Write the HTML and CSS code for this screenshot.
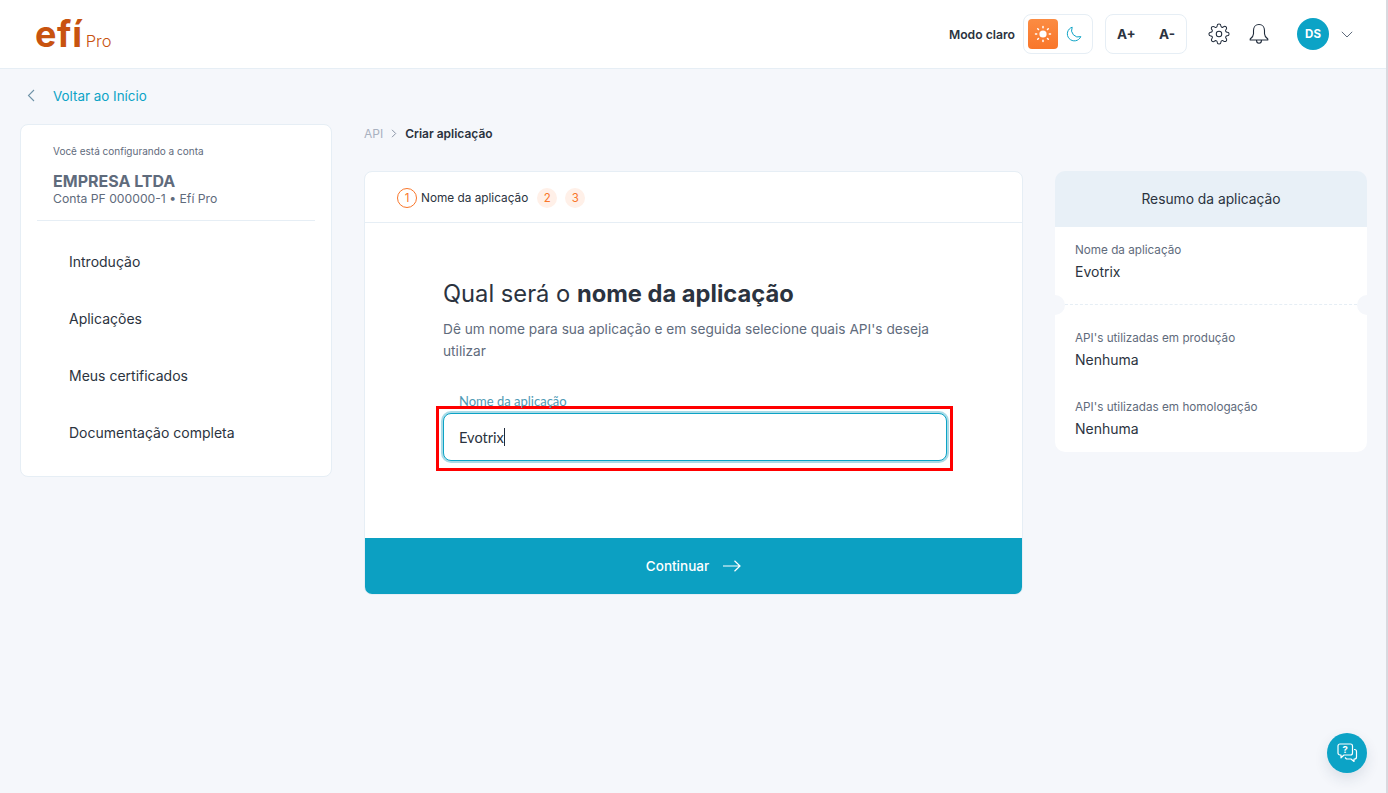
FILE: index.html
```html
<!DOCTYPE html>
<html lang="pt-BR">
<head>
    <meta charset="UTF-8">
    <title>Criar aplicação</title>
    <link rel="stylesheet" href="styles.css">
</head>
<body>
    <header class="topbar">
        <div class="logo">
            <span class="logo-word">efí</span>
            <span class="logo-pro">Pro</span>
        </div>
        <div class="topbar-tools">
            <span class="mode-label">Modo claro</span>
            <div class="tool-box mode-box">
                <span class="mode-sun">
                    <svg width="18" height="18" viewBox="0 0 18 18" fill="none" stroke="#fff" stroke-width="1.5" stroke-linecap="round">
                        <circle cx="9" cy="9" r="3.6" fill="#fff" stroke="none"/>
                        <path d="M9 1.5v1.2M9 15.3v1.2M1.5 9h1.2M15.3 9h1.2M3.7 3.7l.8.8M13.5 13.5l.8.8M3.7 14.3l.8-.8M13.5 4.5l.8-.8"/>
                    </svg>
                </span>
                <svg class="mode-moon" width="16" height="16" viewBox="0 0 16 16" fill="none" stroke="#0ca3c6" stroke-width="1">
                    <path d="M6.2 1.2a6.9 6.9 0 0 0 8.6 9.4A7 7 0 1 1 6.2 1.2z"/>
                </svg>
            </div>
            <div class="tool-box font-box">
                <span>A+</span>
                <span>A-</span>
            </div>
            <svg class="tool-icon" width="22" height="22" viewBox="0 0 24 24" fill="none" stroke="#1f2a3a" stroke-width="1.1" stroke-linejoin="round">
                <circle cx="12" cy="12" r="3"/>
                <path d="M19.4 15a1.65 1.65 0 0 0 .33 1.82l.06.06a2 2 0 0 1 0 2.83 2 2 0 0 1-2.83 0l-.06-.06a1.65 1.65 0 0 0-1.82-.33 1.65 1.65 0 0 0-1 1.51V21a2 2 0 0 1-2 2 2 2 0 0 1-2-2v-.09A1.65 1.65 0 0 0 9 19.4a1.65 1.65 0 0 0-1.82.33l-.06.06a2 2 0 0 1-2.83 0 2 2 0 0 1 0-2.83l.06-.06a1.65 1.65 0 0 0 .33-1.82 1.65 1.65 0 0 0-1.51-1H3a2 2 0 0 1-2-2 2 2 0 0 1 2-2h.09A1.65 1.65 0 0 0 4.6 9a1.65 1.65 0 0 0-.33-1.82l-.06-.06a2 2 0 0 1 0-2.83 2 2 0 0 1 2.83 0l.06.06a1.65 1.65 0 0 0 1.82.33H9a1.65 1.65 0 0 0 1-1.51V3a2 2 0 0 1 2-2 2 2 0 0 1 2 2v.09a1.65 1.65 0 0 0 1 1.51 1.65 1.65 0 0 0 1.82-.33l.06-.06a2 2 0 0 1 2.83 0 2 2 0 0 1 0 2.83l-.06.06a1.65 1.65 0 0 0-.33 1.82V9a1.65 1.65 0 0 0 1.51 1H21a2 2 0 0 1 2 2 2 2 0 0 1-2 2h-.09a1.65 1.65 0 0 0-1.51 1z"/>
            </svg>
            <svg class="tool-icon bell" width="22" height="22" viewBox="0 0 22 22" fill="none" stroke="#1f2a3a" stroke-width="1.1" stroke-linejoin="round">
                <path d="M11 1.5c-3.4 0-5.5 2.7-5.5 6v3.2c0 2.5-1.4 3.8-3.3 5.3v1h17.6v-1c-1.9-1.5-3.3-2.8-3.3-5.3V7.500c0-3.300-2.100-6-5.500-6z"/>
                <path d="M8.500 17c0 1.900 1.100 3.300 2.500 3.300s2.500-1.400 2.500-3.300"/>
            </svg>
            <span class="avatar">DS</span>
            <svg class="avatar-caret" width="12" height="7" viewBox="0 0 12 7" fill="none" stroke="#5f6b7c" stroke-width="1">
                <path d="M.8.800 6 6l5.200-5.200"/>
            </svg>
        </div>
    </header>

    <a class="back-link" href="#">
        <svg width="8" height="13" viewBox="0 0 8 13" fill="none" stroke="#6f93a8" stroke-width="1.100">
            <path d="M7 1 1.500 6.500 7 12"/>
        </svg>
        <span>Voltar ao Início</span>
    </a>

    <main class="layout">
        <aside class="side-card">
            <div class="account">
                <p class="account-hint">Você está configurando a conta</p>
                <p class="account-name">EMPRESA LTDA</p>
                <p class="account-sub">Conta PF 000000-1 • Efí Pro</p>
            </div>
            <nav class="side-nav">
                <a href="#">Introdução</a>
                <a href="#">Aplicações</a>
                <a href="#">Meus certificados</a>
                <a href="#">Documentação completa</a>
            </nav>
        </aside>

        <section class="center">
            <div class="crumbs">
                <span class="crumb-root">API</span>
                <svg width="6" height="9" viewBox="0 0 6 9" fill="none" stroke="#8a94a6" stroke-width="1">
                    <path d="m1 .8 3.700 3.700L1 8.200"/>
                </svg>
                <span class="crumb-current">Criar aplicação</span>
            </div>
            <div class="wizard">
                <div class="steps">
                    <span class="step step-active">1</span>
                    <span class="step-name">Nome da aplicação</span>
                    <span class="step">2</span>
                    <span class="step">3</span>
                </div>
                <div class="wizard-body">
                    <h1>Qual será o <strong>nome da aplicação</strong></h1>
                    <p class="lead">Dê um nome para sua aplicação e em seguida selecione quais API's deseja utilizar</p>
                    <div class="field">
                        <label for="app-name">Nome da aplicação</label>
                        <div class="input-mark">
                            <div class="input-fake" id="app-name">Evotrix<span class="caret"></span></div>
                        </div>
                    </div>
                </div>
                <button class="continue-btn" type="button">
                    <span>Continuar</span>
                    <svg width="18" height="12" viewBox="0 0 18 12" fill="none" stroke="#fff" stroke-width="1.200">
                        <path d="M0 6h17M11.500.8 17 6l-5.500 5.200"/>
                    </svg>
                </button>
            </div>
        </section>

        <aside class="summary">
            <h2>Resumo da aplicação</h2>
            <div class="summary-top">
                <p class="sum-label">Nome da aplicação</p>
                <p class="sum-value">Evotrix</p>
            </div>
            <div class="summary-bottom">
                <p class="sum-label">API's utilizadas em produção</p>
                <p class="sum-value">Nenhuma</p>
                <p class="sum-label sum-gap">API's utilizadas em homologação</p>
                <p class="sum-value">Nenhuma</p>
            </div>
        </aside>
    </main>

    <button class="help-btn" type="button" aria-label="Ajuda">
        <svg width="24" height="24" viewBox="0 0 24 24" fill="none" stroke="#fff" stroke-width="1.200" stroke-linejoin="round">
            <path d="M5 3h10.500A2 2 0 0 1 17.500 5v7a2 2 0 0 1-2 2H9l-3 2.800V14H5a2 2 0 0 1-2-2V5a2 2 0 0 1 2-2z"/>
            <path d="M19 8.500h.500a2 2 0 0 1 2 2V16a2 2 0 0 1-2 2h-.500v2.500L16 18h-4.500l-1.500-1.500"/>
            <text x="10.200" y="11.800" font-size="9.500" font-weight="700" fill="#fff" stroke="none" text-anchor="middle" font-family="Inter, sans-serif">?</text>
        </svg>
    </button>
</body>
</html>
```

FILE: styles.css
```css
* {
    margin: 0;
    padding: 0;
    box-sizing: border-box;
}
body {
    font-family: 'Inter', sans-serif;
    background-color: #f5f7fb;
    color: #2b3340;
    height: 793px;
    overflow: hidden;
    border-right: 2px solid #d9d9df;
}
.topbar {
    height: 69px;
    background-color: #fff;
    border-bottom: 1px solid #e6eef5;
    display: flex;
    align-items: center;
    justify-content: space-between;
    padding: 0 33px 0 35px;
}
.logo {
    display: flex;
    align-items: baseline;
    gap: 3px;
    color: #c8530f;
}
.logo-word {
    font-weight: 700;
    font-size: 36px;
    line-height: 40px;
    letter-spacing: 0.6px;
}
.logo-pro {
    font-size: 16.500px;
    font-weight: 300;
}
.topbar-tools {
    display: flex;
    align-items: center;
}
.mode-label {
    font-size: 12.200px;
    font-weight: 600;
    color: #2b3340;
    margin-right: 8px;
}
.tool-box {
    height: 40px;
    background-color: #fff;
    border: 1px solid #e6eef5;
    border-radius: 8px;
    display: flex;
    align-items: center;
}
.mode-box {
    width: 70px;
    padding-left: 4px;
    margin-right: 12px;
}
.mode-sun {
    width: 30px;
    height: 30px;
    border-radius: 4px;
    background: linear-gradient(180deg, #fb8c43, #f9762a);
    display: flex;
    align-items: center;
    justify-content: center;
}
.mode-moon {
    margin-left: 8px;
}
.font-box {
    width: 82px;
    padding: 0 11px;
    justify-content: space-between;
    font-size: 13.500px;
    font-weight: 700;
    color: #2b3340;
    margin-right: 21px;
}
.tool-icon {
    margin-right: 18px;
}
.bell {
    margin-right: 27px;
}
.avatar {
    width: 32px;
    height: 32px;
    border-radius: 50%;
    background-color: #0ca3c6;
    color: #fff;
    font-size: 11.500px;
    font-weight: 700;
    display: flex;
    align-items: center;
    justify-content: center;
    margin-right: 12px;
}
.back-link {
    display: flex;
    align-items: center;
    height: 55px;
    padding: 0 0 2px 27px;
    gap: 18px;
    font-size: 13.400px;
    color: #0ca3c6;
    text-decoration: none;
}
.layout {
    display: flex;
    align-items: flex-start;
    padding-left: 20px;
}
.side-card {
    width: 312px;
    height: 353px;
    background-color: #fff;
    border: 1px solid #e6eef5;
    border-radius: 8px;
    padding: 0 16px;
    margin-right: 32px;
}
.account {
    padding: 20px 0 12px 16px;
    border-bottom: 1px solid #e6eef5;
}
.account-hint {
    font-size: 10px;
    line-height: 13px;
    color: #5f6b7c;
    margin-bottom: 14px;
}
.account-name {
    font-size: 16px;
    font-weight: 700;
    line-height: 18px;
    color: #5f6b7c;
}
.account-sub {
    font-size: 12.200px;
    line-height: 18px;
    color: #5f6b7c;
}
.side-nav {
    display: flex;
    flex-direction: column;
    padding: 12px 0 0 32px;
}
.side-nav a {
    height: 57px;
    display: flex;
    align-items: center;
    font-size: 14px;
    color: #2b3340;
    text-decoration: none;
}
.center {
    width: 659px;
    margin-right: 32px;
}
.crumbs {
    height: 47px;
    display: flex;
    align-items: flex-start;
    gap: 8px;
    padding-top: 1px;
    font-size: 12px;
    line-height: 17px;
}
.crumbs svg {
    margin-top: 4px;
}
.crumb-root {
    color: #a9b1c0;
}
.crumb-current {
    font-weight: 600;
    color: #2b3340;
}
.wizard {
    height: 424px;
    background-color: #fff;
    border: 1px solid #e6eef5;
    border-radius: 8px;
    overflow: hidden;
    display: flex;
    flex-direction: column;
}
.steps {
    height: 51px;
    flex-shrink: 0;
    border-bottom: 1px solid #e6eef5;
    display: flex;
    align-items: center;
    padding: 1px 0 0 32px;
}
.step {
    width: 20px;
    height: 20px;
    border-radius: 50%;
    background-color: #fff0e8;
    color: #f9762a;
    font-size: 11.500px;
    display: flex;
    align-items: center;
    justify-content: center;
    margin-right: 8px;
}
.step-active {
    background-color: #fff;
    border: 1px solid #f9762a;
    margin-right: 4px;
}
.step-name {
    font-size: 11.800px;
    color: #2b3340;
    margin-right: 9px;
}
.wizard-body {
    flex: 1;
    padding: 55px 78px 0;
}
.wizard-body h1 {
    font-size: 23.700px;
    font-weight: 400;
    line-height: 32px;
    color: #2b3340;
}
.wizard-body h1 strong {
    font-weight: 700;
}
.lead {
    font-size: 13.700px;
    line-height: 22px;
    color: #5f6b7c;
    margin-top: 8px;
    width: 500px;
}
.field {
    margin-top: 32px;
}
.field label {
    display: block;
    font-family: 'Lato', sans-serif;
    font-size: 13px;
    line-height: 14px;
    color: #4f9ab5;
    padding-left: 16px;
    margin-bottom: -2px;
}
.input-mark {
    border: 3px solid #f00;
    margin-left: -7px;
    width: 517px;
    height: 65px;
    padding: 4px 3px 0 4px;
}
.input-fake {
    height: 48px;
    border: 1px solid #0ca3c6;
    border-radius: 8px;
    box-shadow: 0 0 0 2px #a9dbe7;
    font-family: 'Lato', sans-serif;
    font-size: 14.600px;
    color: #2b3340;
    display: flex;
    align-items: center;
    padding-left: 15px;
    background-color: #fff;
}
.caret {
    width: 1px;
    height: 18px;
    background-color: #1f2a3a;
}
.continue-btn {
    height: 56px;
    flex-shrink: 0;
    border: none;
    background-color: #0ca0c2;
    color: #fff;
    font-family: inherit;
    font-size: 13.500px;
    font-weight: 500;
    display: flex;
    align-items: center;
    justify-content: center;
    gap: 14px;
}
.summary {
    width: 312px;
    margin-top: 47px;
    border-radius: 10px;
    overflow: hidden;
    position: relative;
}
.summary h2 {
    height: 56px;
    background-color: #e8f0f7;
    font-size: 13.800px;
    font-weight: 400;
    color: #2b3340;
    display: flex;
    align-items: center;
    justify-content: center;
}
.summary-top {
    position: relative;
    background-color: #fff;
    height: 78px;
    padding: 14px 20px 0;
    border-bottom: 1px dashed #e6eef5;
}
/* recortes laterais do ticket */
.summary-top::before,
.summary-top::after {
    content: "";
    position: absolute;
    bottom: -11px;
    width: 20px;
    height: 20px;
    border-radius: 50%;
    background-color: #f5f7fb;
    z-index: 1;
}
.summary-top::before {
    left: -10px;
}
.summary-top::after {
    right: -10px;
}
.summary-bottom {
    background-color: #fff;
    height: 147px;
    padding: 24px 20px 0;
}
.sum-label {
    font-size: 11.700px;
    line-height: 18px;
    color: #5f6b7c;
}
.sum-value {
    font-size: 14px;
    line-height: 20px;
    color: #2b3340;
    margin-top: 3px;
}
.sum-gap {
    margin-top: 28px;
}
.help-btn {
    position: absolute;
    left: 1327px;
    top: 733px;
    width: 40px;
    height: 40px;
    border: none;
    border-radius: 50%;
    background-color: #0ca3c6;
    box-shadow: 0 6px 14px rgba(30, 60, 90, 0.12);
    display: flex;
    align-items: center;
    justify-content: center;
}
```
